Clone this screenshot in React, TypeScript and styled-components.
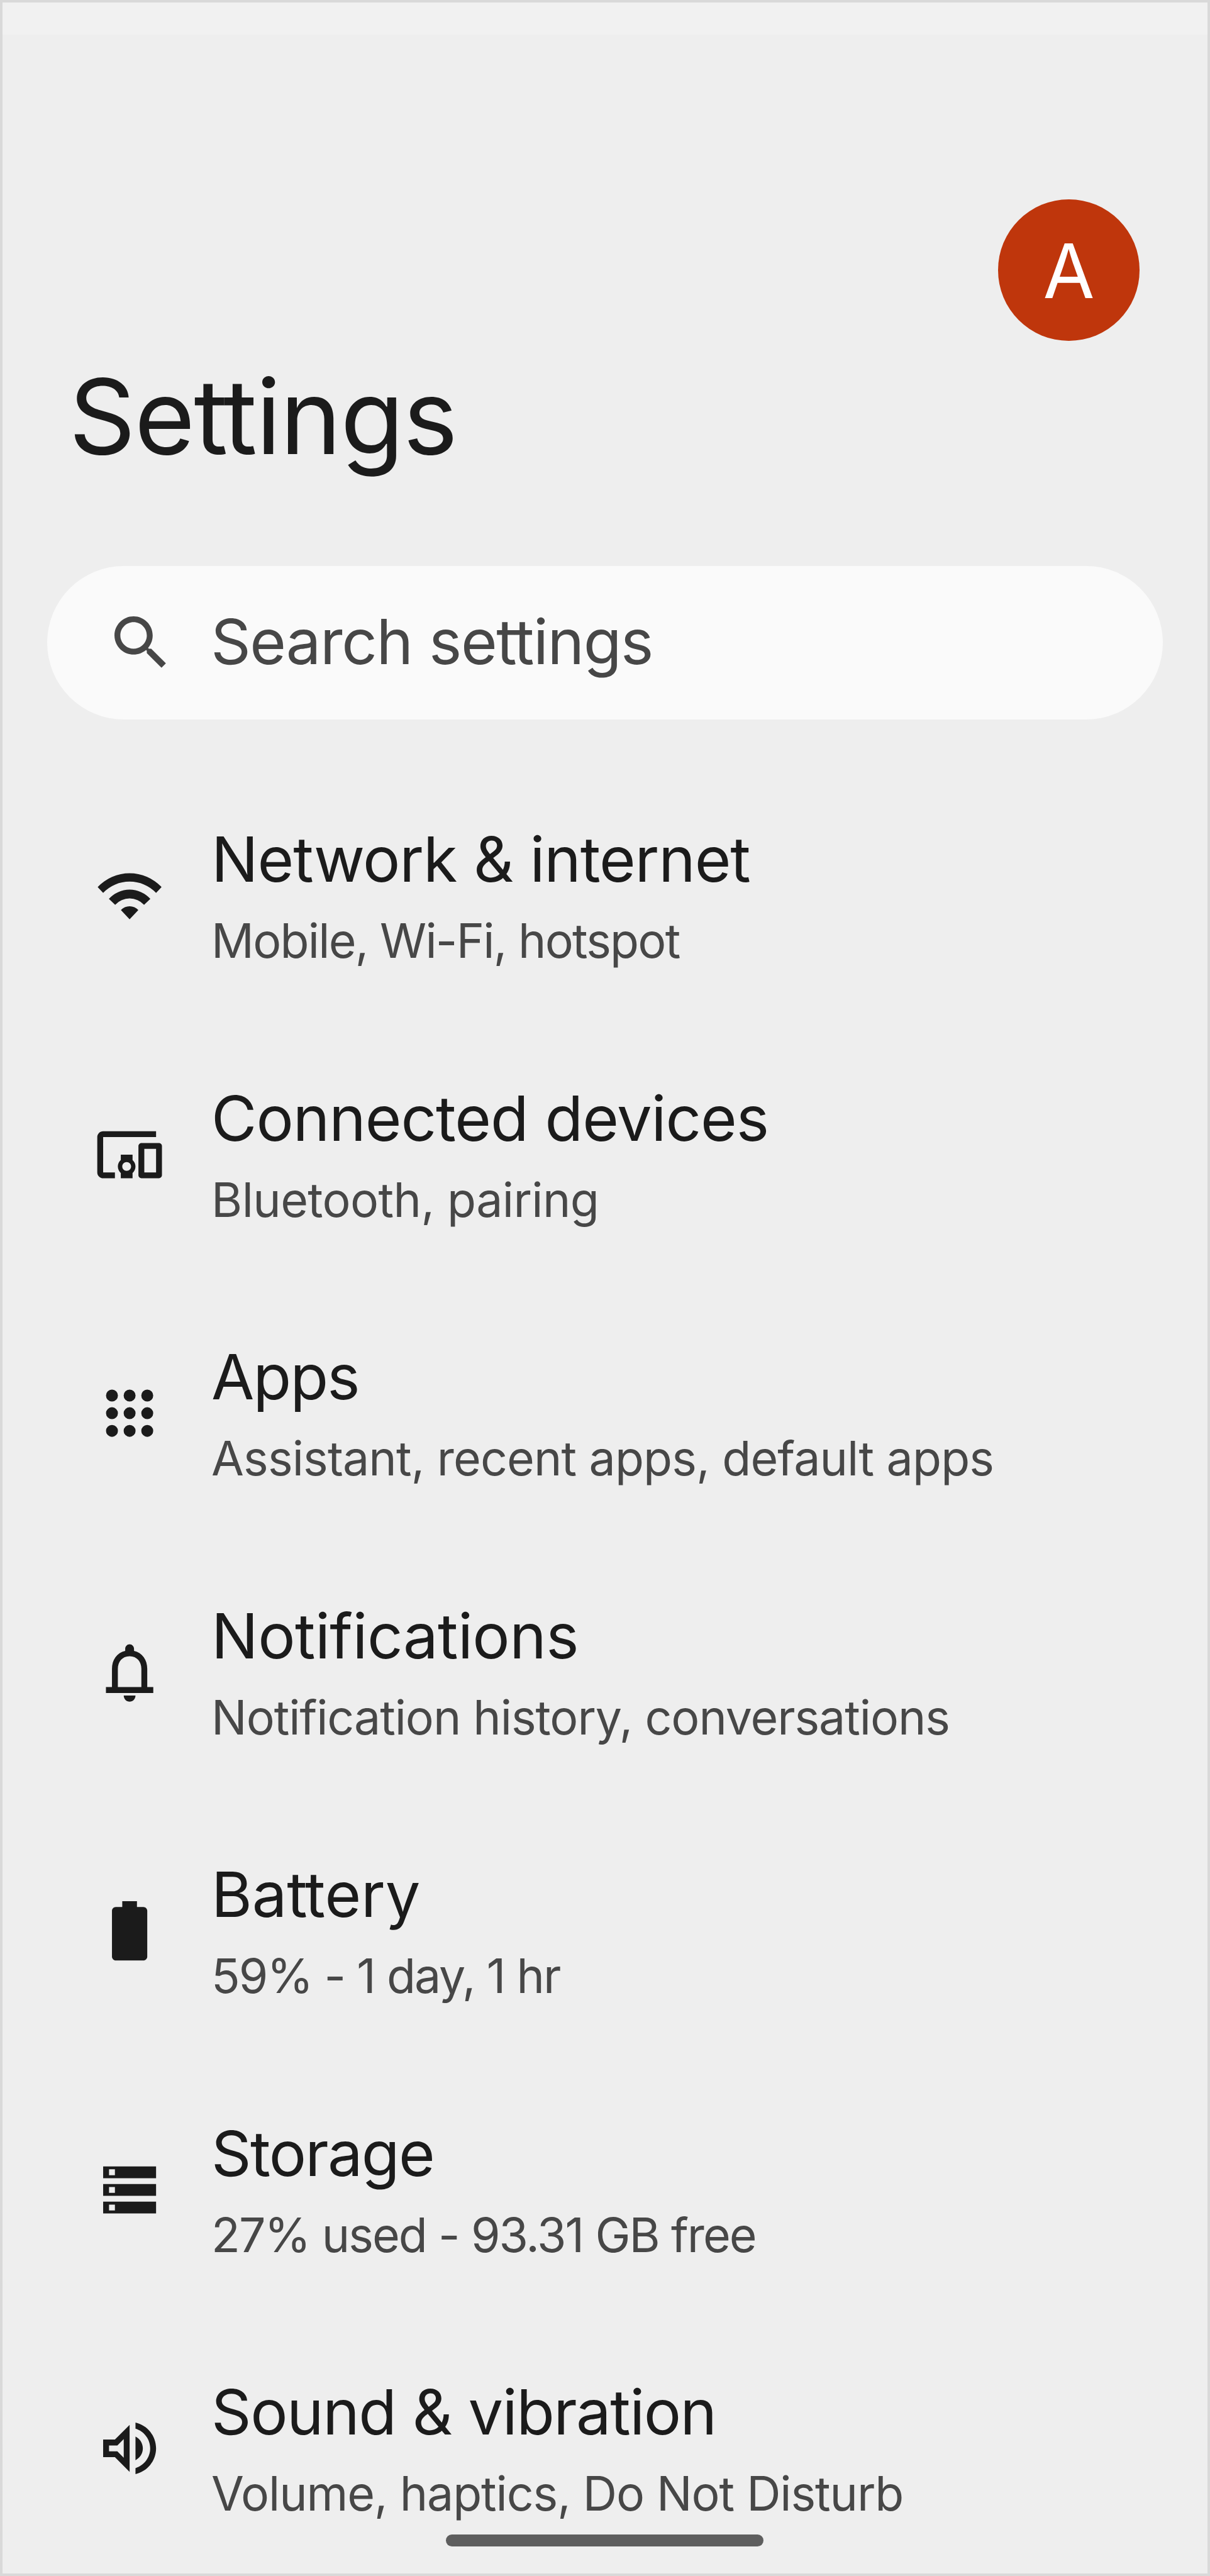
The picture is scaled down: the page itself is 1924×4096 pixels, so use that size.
import React from 'react';
import styled, { createGlobalStyle } from 'styled-components';

const GlobalStyle = createGlobalStyle`
  body {
    margin: 0;
    background: #eeeeee;
    font-family: Inter, Roboto, 'Liberation Sans', sans-serif;
    font-weight: 400;
    color: #1b1b1b;
  }
`;

const Screen = styled.main`
  position: relative;
  box-sizing: border-box;
  display: flex;
  flex-direction: column;
  width: 1924px;
  height: 4096px;
  border: 4px solid #d9d9d9;
  background: #eeeeee;
  overflow: hidden;
`;

const StatusBar = styled.div`
  flex: none;
  height: 51.2px;
  background: #f1f1f1;
`;

const Header = styled.header`
  flex: none;
  display: flex;
  flex-direction: column;
  padding: 262px 108.2px 0 105.5px;
`;

const Avatar = styled.div`
  align-self: flex-end;
  box-sizing: border-box;
  display: flex;
  align-items: center;
  justify-content: center;
  width: 224.5px;
  height: 224.5px;
  padding-top: 3px;
  border-radius: 50%;
  background: #bf360c;
  color: #ffffff;
  font-size: 118.9px;
  line-height: 140px;
`;

const Title = styled.h1`
  margin: 20.5px 0 0;
  font-size: 165.3px;
  font-weight: 400;
  line-height: 200px;
  letter-spacing: -1.8px;
  white-space: nowrap;
`;

const SearchBar = styled.div`
  flex: none;
  box-sizing: border-box;
  display: flex;
  align-items: center;
  height: 244.5px;
  margin: 137.5px 70.9px 0 70.8px;
  padding-left: 93.6px;
  border-radius: 122.3px;
  background: #fafafa;
  color: #474747;
`;

const SearchText = styled.span`
  padding-bottom: 3px;
  margin-left: 54.6px;
  font-size: 99.1px;
  line-height: 120px;
  letter-spacing: -1.4px;
  white-space: nowrap;
`;

const List = styled.ul`
  flex: none;
  display: flex;
  flex-direction: column;
  margin: 74.3px 0 0;
  padding: 0;
  list-style: none;
`;

const Item = styled.li`
  display: flex;
  align-items: center;
  gap: 74.2px;
  height: 411.5px;
  padding-left: 145.7px;
`;

const Labels = styled.div`
  display: flex;
  flex-direction: column;
  gap: 24.6px;
  padding-bottom: 1px;
`;

const ItemTitle = styled.span<{ $track: number }>`
  font-size: 99.1px;
  line-height: 120px;
  letter-spacing: ${(p) => p.$track}px;
  white-space: nowrap;
`;

const ItemSummary = styled.span<{ $track: number }>`
  color: #474747;
  font-size: 75.2px;
  line-height: 90px;
  letter-spacing: ${(p) => p.$track}px;
  white-space: nowrap;
`;

const Tie = styled.span`
  margin-right: -0.035em;
`;

const Glyph = styled.svg`
  flex: none;
  display: block;
  width: 112.2px;
  height: 112.2px;
  fill: currentColor;
`;

const HomeIndicator = styled.div`
  position: absolute;
  left: 704.8px;
  bottom: 43px;
  width: 505.6px;
  height: 19px;
  border-radius: 9.5px;
  background: #5e5e5e;
`;

/* Joins the crossbars of a double t. */
function Tied({ text }: { text: string }) {
  const at = text.indexOf('tt');
  if (at < 0) return <>{text}</>;
  return (
    <>
      {text.slice(0, at)}
      <Tie>t</Tie>
      {text.slice(at + 1)}
    </>
  );
}

const icons = {
  search:
    'M15.5 14h-.79l-.28-.27C15.41 12.59 16 11.11 16 9.5 16 5.91 13.09 3 9.5 3S3 5.91 3 9.5 5.91 16 9.5 16c1.61 0 3.09-.59 4.23-1.57l.27.28v.79l5 4.99L20.49 19l-4.99-5zm-6 0C7.01 14 5 11.99 5 9.5S7.01 5 9.5 5 14 7.01 14 9.5 11.99 14 9.5 14z',
  wifi:
    'M1.13 9.08A14.92 14.92 0 0 1 22.87 9.08L21 11.05A12.5 12.5 0 0 0 3 11.05zM4.95 13.08A9.54 9.54 0 0 1 19.05 13.08L16.92 15.11A6.68 6.68 0 0 0 7.08 15.11zM9.03 16.9A4.09 4.09 0 0 1 14.97 16.9L12 20.06z',
  devices:
    'M3 6h18V4H3c-1.1 0-2 .9-2 2v12c0 1.1.9 2 2 2h4v-2H3V6zm10 6H9v1.78c-.61.55-1 1.33-1 2.22s.39 1.67 1 2.22V20h4v-1.78c.61-.55 1-1.34 1-2.22s-.39-1.67-1-2.22V12zm-2 5.5c-.83 0-1.5-.67-1.5-1.5s.67-1.5 1.5-1.5 1.5.67 1.5 1.5-.67 1.5-1.5 1.5zM22 8h-6c-.5 0-1 .5-1 1v10c0 .5.5 1 1 1h6c.5 0 1-.5 1-1V9c0-.5-.5-1-1-1zm-1 10h-4v-8h4v8z',
  apps: [6, 12, 18]
    .flatMap((y) => [6, 12, 18].map((x) => `M${x - 2.03} ${y}a2.03 2.03 0 1 0 4.06 0a2.03 2.03 0 1 0 -4.06 0z`))
    .join(''),
  bell:
    'M12 22c1.1 0 2-.95 2-2.1h-4c0 1.15.9 2.1 2 2.1zM18 17v-6.2c0-3-1.6-5.4-4.5-6.1V4c0-.83-.67-1.55-1.5-1.55s-1.5.72-1.5 1.55v.7C7.6 5.4 6 7.8 6 10.8V17H3.95v2.05h16.1V17zM8 17v-6.2c0-2.4 1.5-4.3 4-4.3s4 1.9 4 4.3V17z',
  battery:
    'M9.5 1.9h5v2h2.2c.7 0 1.3.6 1.3 1.3v15.6c0 .7-.6 1.3-1.3 1.3H7.3c-.7 0-1.3-.6-1.3-1.3V5.2c0-.7.6-1.3 1.3-1.3h2.2z',
  storage:
    'M3 4h18v4H3zM5 5v2h2V5zM3 10h18v4H3zM5 11v2h2v-2zM3 16h18v4H3zM5 17v2h2v-2z',
  sound:
    'M3 9v6h4l5 5V4L7 9H3zm7-.17v6.34L7.83 13H5v-2h2.83L10 8.83zM16.5 12c0-1.77-1.02-3.29-2.5-4.03v8.05c1.48-.73 2.5-2.25 2.5-4.02zM14 3.23v2.06c2.89.86 5 3.54 5 6.71s-2.11 5.85-5 6.71v2.06c4.01-.91 7-4.49 7-8.77 0-4.28-2.99-7.86-7-8.77z',
};

type IconName = keyof typeof icons;

function Icon({ name }: { name: IconName }) {
  return (
    <Glyph viewBox="0 0 24 24" aria-hidden>
      <path d={icons[name]} fillRule="evenodd" />
    </Glyph>
  );
}

interface Entry {
  icon: IconName;
  title: string;
  titleTrack: number;
  summary: string;
  summaryTrack: number;
}

const entries: Entry[] = [
  { icon: 'wifi', title: 'Network & internet', titleTrack: -1.15, summary: 'Mobile, Wi-Fi, hotspot', summaryTrack: -1.76 },
  { icon: 'devices', title: 'Connected devices', titleTrack: -1.06, summary: 'Bluetooth, pairing', summaryTrack: -0.6 },
  { icon: 'apps', title: 'Apps', titleTrack: -1.82, summary: 'Assistant, recent apps, default apps', summaryTrack: -0.86 },
  { icon: 'bell', title: 'Notifications', titleTrack: -0.55, summary: 'Notification history, conversations', summaryTrack: -1.05 },
  { icon: 'battery', title: 'Battery', titleTrack: -0.15, summary: '59% - 1 day, 1 hr', summaryTrack: -1.99 },
  { icon: 'storage', title: 'Storage', titleTrack: -1.72, summary: '27% used - 93.31 GB free', summaryTrack: -1.95 },
  { icon: 'sound', title: 'Sound & vibration', titleTrack: -1.5, summary: 'Volume, haptics, Do Not Disturb', summaryTrack: -1.09 },
];

export default function App() {
  return (
    <>
      <GlobalStyle />
      <Screen>
        <StatusBar />
        <Header>
          <Avatar>A</Avatar>
          <Title>
            <Tied text="Settings" />
          </Title>
        </Header>
        <SearchBar>
          <Icon name="search" />
          <SearchText>
            <Tied text="Search settings" />
          </SearchText>
        </SearchBar>
        <List>
          {entries.map((e) => (
            <Item key={e.title}>
              <Icon name={e.icon} />
              <Labels>
                <ItemTitle $track={e.titleTrack}>
                  <Tied text={e.title} />
                </ItemTitle>
                <ItemSummary $track={e.summaryTrack}>{e.summary}</ItemSummary>
              </Labels>
            </Item>
          ))}
        </List>
        <HomeIndicator />
      </Screen>
    </>
  );
}
